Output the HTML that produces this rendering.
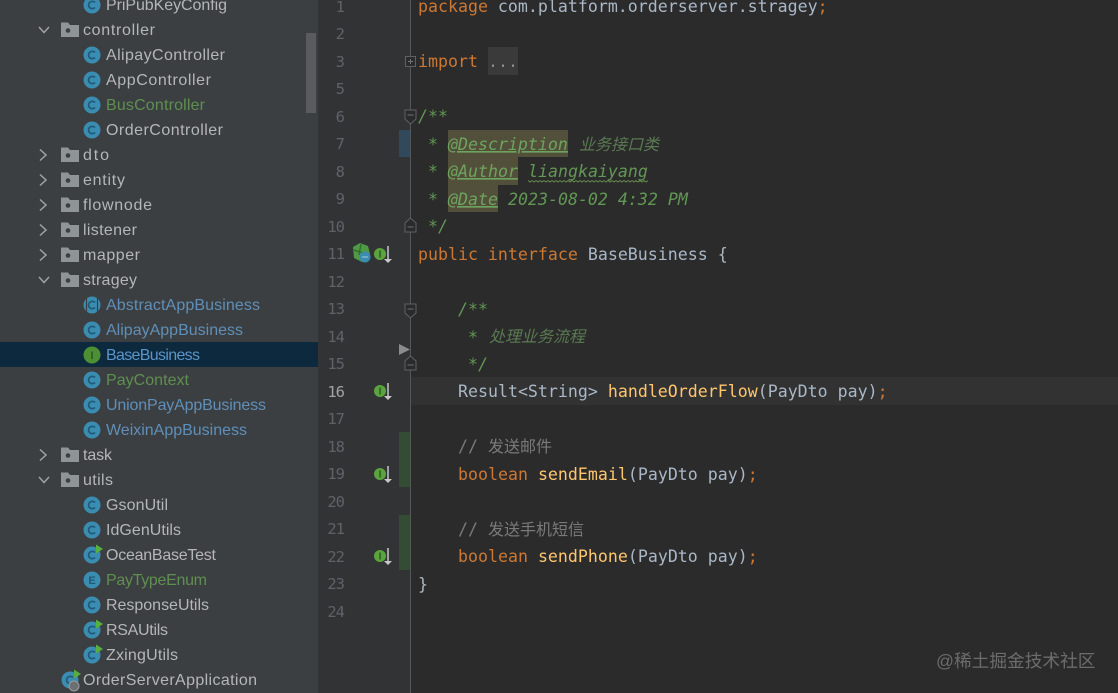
<!DOCTYPE html>
<html><head><meta charset="utf-8"><style>
html,body{margin:0;padding:0;background:#2b2b2b;overflow:hidden}
svg{display:block}
.t{font-family:"Liberation Sans","Noto Sans CJK SC",sans-serif;font-size:16px;fill:#b4b6b8}
.b{fill:#5f8fb8}.g{fill:#5f8f50}.s{fill:#5a94c8}
.c{font-family:"DejaVu Sans Mono","Liberation Mono",monospace;font-size:16.6px;fill:#a9b7c6;white-space:pre}
.k{fill:#cc7832}.m{fill:#ffc66d}
.d{fill:#629755;font-style:italic}
.tag{fill:#6ea35e;font-style:italic;text-decoration:underline}
.cj{font-family:"Noto Sans CJK SC",sans-serif;font-size:16px;font-style:italic;fill:#5a7a52}
.cg{font-family:"Noto Sans CJK SC",sans-serif;font-size:16px;fill:#7a7a7a}
.n{font-family:"DejaVu Sans Mono",monospace;font-size:15.500px;letter-spacing:-1px;fill:#606366;text-anchor:end}
.ic{font-family:"Liberation Sans",sans-serif;font-size:11px;font-weight:bold;text-anchor:middle;fill:#1f5a78}
</style></head><body>
<svg width="1118" height="693" viewBox="0 0 1118 693" xmlns="http://www.w3.org/2000/svg">
<defs>
<g id="fo"><path d="M0 -7.500H7L9 -5H18V7H0Z" fill="#8f9496"/><circle cx="7" cy="0.500" r="2.300" fill="#3c3f41"/></g>
<path id="dn" d="M-5 -3L0 2.500L5 -3" fill="none" stroke="#a0a2a4" stroke-width="1.500"/>
<path id="rt" d="M-3 -5.500L3 0L-3 5.500" fill="none" stroke="#a0a2a4" stroke-width="1.500"/>
<g id="cl"><circle r="8.500" fill="#3a8cb0"/><path d="M3 -2.500A3.700 3.700 0 1 0 3 2.500" fill="none" stroke="#1f5a78" stroke-width="1.700"/></g>
<g id="rn"><use href="#cl"/><path d="M4 -10.500L11 -6L4 -1.500Z" fill="#55b03e"/></g>
<g id="ar"><circle cx="-8" cy="0" r="6" fill="#5aa33e"/><rect x="-8.700" y="-3.500" width="1.500" height="7" fill="#2c5a22"/><path d="M0 -8V5" stroke="#c8c8c8" stroke-width="1.500"/><path d="M-4 5H4L0 9Z" fill="#c8c8c8"/></g>
<g id="fd"><path d="M-5.500 -7H5.500V2L0 7L-5.500 2Z" fill="#2b2b2b" stroke="#5f6163"/><path d="M-3 -2H3" stroke="#6f7173"/></g>
<g id="fu"><path d="M-5.500 7H5.500V-2L0 -7L-5.500 -2Z" fill="#2b2b2b" stroke="#5f6163"/><path d="M-3 2H3" stroke="#6f7173"/></g>
</defs>

<rect width="1118" height="693" fill="#2b2b2b"/>
<rect width="318" height="693" fill="#3c3f41"/>
<rect x="318" width="92" height="693" fill="#313335"/>
<rect x="410" width="1" height="693" fill="#555759"/>
<rect x="306" y="33" width="10" height="80" fill="#595b5d"/>
<rect y="342" width="318" height="25" fill="#0d293e"/>

<!-- tree chevrons -->
<use href="#dn" x="44" y="30"/>
<use href="#rt" x="43" y="155"/><use href="#rt" x="43" y="180"/><use href="#rt" x="43" y="205"/><use href="#rt" x="43" y="230"/><use href="#rt" x="43" y="255"/>
<use href="#dn" x="44" y="280"/><use href="#rt" x="43" y="455"/><use href="#dn" x="44" y="480"/>
<!-- folders -->
<use href="#fo" x="61" y="30"/><use href="#fo" x="61" y="155"/><use href="#fo" x="61" y="180"/><use href="#fo" x="61" y="205"/><use href="#fo" x="61" y="230"/><use href="#fo" x="61" y="255"/><use href="#fo" x="61" y="280"/><use href="#fo" x="61" y="455"/><use href="#fo" x="61" y="480"/>
<!-- class icons -->
<use href="#cl" x="92" y="5"/><use href="#cl" x="92" y="55"/><use href="#cl" x="92" y="80"/><use href="#cl" x="92" y="105"/><use href="#cl" x="92" y="130"/>
<use href="#cl" x="92" y="305"/><path d="M86.500 296V314M97.500 296V314" stroke="#3c3f41" stroke-width="1.200"/>
<use href="#cl" x="92" y="330"/>
<circle cx="92" cy="355" r="8.500" fill="#4c8f35"/><text x="92" y="359" class="ic" style="fill:#2c5a22">I</text>
<use href="#cl" x="92" y="380"/><use href="#cl" x="92" y="405"/><use href="#cl" x="92" y="430"/>
<use href="#cl" x="92" y="505"/><use href="#cl" x="92" y="530"/><use href="#rn" x="92" y="555"/>
<circle cx="92" cy="580" r="8.500" fill="#3a8cb0"/><text x="92" y="584" class="ic">E</text>
<use href="#cl" x="92" y="605"/><use href="#rn" x="92" y="630"/><use href="#rn" x="92" y="655"/>
<use href="#rn" x="70" y="680"/><circle cx="74" cy="686" r="5" fill="#6d7072" stroke="#9a9c9e"/>

<!-- tree labels -->
<text class="t" x="106" y="10" textLength="121" lengthAdjust="spacing">PriPubKeyConfig</text>
<text class="t" x="83" y="35" textLength="72" lengthAdjust="spacing">controller</text>
<text class="t" x="106" y="60" textLength="119" lengthAdjust="spacing">AlipayController</text>
<text class="t" x="106" y="85" textLength="105" lengthAdjust="spacing">AppController</text>
<text class="t g" x="106" y="110" textLength="99" lengthAdjust="spacing">BusController</text>
<text class="t" x="106" y="135" textLength="117" lengthAdjust="spacing">OrderController</text>
<text class="t" x="83" y="160" textLength="26" lengthAdjust="spacing">dto</text>
<text class="t" x="83" y="185" textLength="42" lengthAdjust="spacing">entity</text>
<text class="t" x="83" y="210" textLength="69" lengthAdjust="spacing">flownode</text>
<text class="t" x="83" y="235" textLength="54" lengthAdjust="spacing">listener</text>
<text class="t" x="83" y="260" textLength="57" lengthAdjust="spacing">mapper</text>
<text class="t" x="83" y="285" textLength="54" lengthAdjust="spacing">stragey</text>
<text class="t b" x="106" y="310" textLength="154" lengthAdjust="spacing">AbstractAppBusiness</text>
<text class="t b" x="106" y="335" textLength="137" lengthAdjust="spacing">AlipayAppBusiness</text>
<text class="t s" x="106" y="360" textLength="94" lengthAdjust="spacing">BaseBusiness</text>
<text class="t g" x="106" y="385" textLength="83" lengthAdjust="spacing">PayContext</text>
<text class="t b" x="106" y="410" textLength="160" lengthAdjust="spacing">UnionPayAppBusiness</text>
<text class="t b" x="106" y="435" textLength="141" lengthAdjust="spacing">WeixinAppBusiness</text>
<text class="t" x="83" y="460" textLength="29" lengthAdjust="spacing">task</text>
<text class="t" x="83" y="485" textLength="30" lengthAdjust="spacing">utils</text>
<text class="t" x="106" y="510" textLength="62" lengthAdjust="spacing">GsonUtil</text>
<text class="t" x="106" y="535" textLength="75" lengthAdjust="spacing">IdGenUtils</text>
<text class="t" x="106" y="560" textLength="110" lengthAdjust="spacing">OceanBaseTest</text>
<text class="t g" x="106" y="585" textLength="101" lengthAdjust="spacing">PayTypeEnum</text>
<text class="t" x="106" y="610" textLength="103" lengthAdjust="spacing">ResponseUtils</text>
<text class="t" x="106" y="635" textLength="62" lengthAdjust="spacing">RSAUtils</text>
<text class="t" x="106" y="660" textLength="72" lengthAdjust="spacing">ZxingUtils</text>
<text class="t" x="83" y="685" textLength="174" lengthAdjust="spacing">OrderServerApplication</text>

<!-- editor backgrounds -->
<rect x="411" y="377" width="707" height="28" fill="#323232"/>
<rect x="399" y="130" width="11" height="27" fill="#31495a"/>
<rect x="399" y="432" width="11" height="55" fill="#344c34"/>
<rect x="399" y="515" width="11" height="55" fill="#344c34"/>
<rect x="488" y="47" width="30" height="28" fill="#3a3a3a"/>
<rect x="448" y="130" width="120" height="27" fill="#52503a"/>
<rect x="448" y="157" width="70" height="28" fill="#52503a"/>
<rect x="448" y="185" width="50" height="27" fill="#52503a"/>

<!-- line numbers -->
<text class="n" x="344" y="12">1</text><text class="n" x="344" y="39">2</text><text class="n" x="344" y="67">3</text><text class="n" x="344" y="94">5</text><text class="n" x="344" y="122">6</text><text class="n" x="344" y="149">7</text><text class="n" x="344" y="177">8</text><text class="n" x="344" y="204">9</text><text class="n" x="344" y="232">10</text><text class="n" x="344" y="259">11</text><text class="n" x="344" y="287">12</text><text class="n" x="344" y="314">13</text><text class="n" x="344" y="342">14</text><text class="n" x="344" y="369">15</text><text class="n" x="344" y="397" style="fill:#a4a3a3">16</text><text class="n" x="344" y="424">17</text><text class="n" x="344" y="452">18</text><text class="n" x="344" y="479">19</text><text class="n" x="344" y="507">20</text><text class="n" x="344" y="534">21</text><text class="n" x="344" y="562">22</text><text class="n" x="344" y="589">23</text><text class="n" x="344" y="617">24</text>

<!-- gutter icons -->
<path d="M353 247L360 243L368 246L370 254L362 262L354 258Z" fill="#4f9a45"/><path d="M354 250L363 253M361 244L359 255" stroke="#2f6a30" stroke-width="1.300"/>
<circle cx="365" cy="257" r="5.500" fill="#3a8cb0"/><path d="M362 257H368" stroke="#a8c8d8"/>
<use href="#ar" x="388" y="254"/><use href="#ar" x="388" y="391"/><use href="#ar" x="388" y="474"/><use href="#ar" x="388" y="556"/>
<rect x="405.500" y="56.500" width="10" height="10" fill="#2b2b2b" stroke="#5f6163"/><path d="M408 61.500H413M410.500 59V64" stroke="#6f7173"/>
<use href="#fd" x="410.500" y="117"/><use href="#fu" x="410.500" y="225"/><use href="#fd" x="410.500" y="311"/><use href="#fu" x="410.500" y="363"/>
<path d="M399 344L410 349.500L399 355Z" fill="#8a8c8e"/>

<!-- code -->
<text class="c" x="418" y="12" xml:space="preserve"><tspan class="k">package</tspan> com.platform.orderserver.stragey<tspan class="k">;</tspan></text>
<text class="c k" x="418" y="67">import</text>
<text class="c" x="488" y="67" style="fill:#8a8a8a">...</text>
<text class="c d" x="418" y="122">/**</text>
<text class="c d" x="428" y="150">*</text><text class="c tag" x="448" y="150">@Description</text><text class="cj" x="579" y="150">业务接口类</text>
<text class="c d" x="428" y="177">*</text><text class="c tag" x="448" y="177">@Author</text><text class="c d" x="528" y="177">liangkaiyang</text>
<path d="M528 180.500l2 1.500l2-1.500l2 1.500l2-1.500l2 1.500l2-1.500l2 1.500l2-1.500l2 1.500l2-1.500l2 1.500l2-1.500l2 1.500l2-1.500l2 1.500l2-1.500l2 1.500l2-1.500l2 1.500l2-1.500l2 1.500l2-1.500l2 1.500l2-1.500l2 1.500l2-1.500l2 1.500l2-1.500l2 1.500l2-1.500l2 1.500l2-1.500l2 1.500l2-1.500l2 1.500l2-1.500l2 1.500l2-1.500l2 1.500l2-1.500l2 1.500l2-1.500l2 1.500l2-1.500l2 1.500l2-1.500l2 1.500l2-1.500l2 1.500l2-1.500l2 1.500l2-1.500l2 1.500l2-1.500l2 1.500l2-1.500l2 1.500l2-1.500l2 1.500l2-1.500" fill="none" stroke="#6b8f50" stroke-width=".9"/>
<text class="c d" x="428" y="205">*</text><text class="c tag" x="448" y="205">@Date</text><text class="c d" x="508" y="205">2023-08-02 4:32 PM</text>
<text class="c d" x="428" y="232">*/</text>
<text class="c" x="418" y="260" xml:space="preserve"><tspan class="k">public interface</tspan> BaseBusiness {</text>
<text class="c d" x="458" y="315">/**</text>
<text class="c d" x="468" y="343">*</text><text class="cj" x="489" y="342">处理业务流程</text>
<text class="c d" x="468" y="370">*/</text>
<text class="c" x="458" y="397" xml:space="preserve">Result&lt;String&gt; <tspan class="m">handleOrderFlow</tspan>(PayDto pay)<tspan class="k">;</tspan></text>
<text class="c" x="458" y="452" style="fill:#7a7a7a">//</text><text class="cg" x="488" y="452">发送邮件</text>
<text class="c" x="458" y="480" xml:space="preserve"><tspan class="k">boolean</tspan> <tspan class="m">sendEmail</tspan>(PayDto pay)<tspan class="k">;</tspan></text>
<text class="c" x="458" y="535" style="fill:#7a7a7a">//</text><text class="cg" x="488" y="535">发送手机短信</text>
<text class="c" x="458" y="562" xml:space="preserve"><tspan class="k">boolean</tspan> <tspan class="m">sendPhone</tspan>(PayDto pay)<tspan class="k">;</tspan></text>
<text class="c" x="418" y="590">}</text>

<!-- watermark -->
<text x="936" y="667" style="font-family:'Liberation Sans','Noto Sans CJK SC',sans-serif;font-size:17.700px;fill:#6c6c6c">@稀土掘金技术社区</text>
</svg>
</body></html>
